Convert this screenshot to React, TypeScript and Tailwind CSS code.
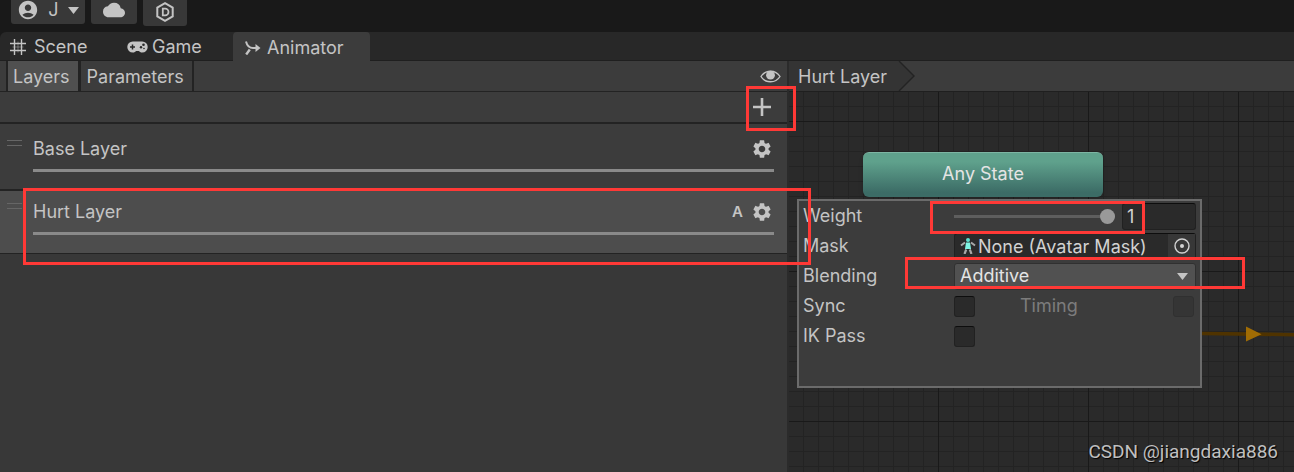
import { useState } from "react";
import { MdAccountCircle, MdCloud, MdSettings } from "react-icons/md";

const layers = [
  { id: 1, name: "Base Layer", additive: false },
  { id: 2, name: "Hurt Layer", additive: true },
];

function GridIcon() {
  return (
    <svg width="16" height="16" viewBox="0 0 16 16" stroke="currentColor" strokeWidth="1.4" fill="none">
      <path d="M4.5 0v16M11.5 0v16M0 4.5h16M0 11.5h16" />
      <path d="M8 2.5v11M2.5 8h11" strokeWidth="1" opacity="0.45" />
    </svg>
  );
}

function GameIcon() {
  return (
    <svg width="21" height="12" viewBox="0 0 21 12">
      <path
        fill="currentColor"
        d="M5.8 0.5h9.4a5.5 5.5 0 0 1 0 11c-1.6 0-2.6-.6-3.4-1.5H9.2c-.8.9-1.8 1.5-3.4 1.5a5.5 5.5 0 0 1 0-11z"
      />
      <path d="M5.5 3.5v5M3 6h5" stroke="#282828" strokeWidth="1.5" />
      <circle cx="16.5" cy="3.8" r="1.3" fill="#282828" />
      <circle cx="14" cy="6.3" r="1.2" fill="#282828" />
      <circle cx="17" cy="7.5" r="0.8" fill="#282828" />
    </svg>
  );
}

function AnimatorIcon() {
  return (
    <svg width="16" height="14" viewBox="0 0 16 14" fill="none" stroke="currentColor">
      <path d="M1 0.5C2 4.5 4.5 7 8 7h4" strokeWidth="2" />
      <path d="M1.2 13.5l3.6-5" strokeWidth="2.4" />
      <path d="M10.5 3L15.5 7l-5 4z" fill="currentColor" stroke="none" />
    </svg>
  );
}

function HexIcon() {
  return (
    <svg width="20" height="20" viewBox="0 0 20 20" fill="none" stroke="currentColor">
      <path d="M10 1.2l7.7 4.4v8.8L10 18.8l-7.7-4.4V5.6z" strokeWidth="2" />
      <path d="M7.8 6.6h2.3a3.4 3.4 0 0 1 0 6.8H7.8z" strokeWidth="1.8" />
    </svg>
  );
}

function EyeIcon() {
  return (
    <svg width="21" height="13" viewBox="0 0 21 13">
      <path
        d="M1 6.5C3.2 3 6.6 1.2 10.5 1.2S17.8 3 20 6.5c-2.2 3.5-5.6 5.3-9.5 5.3S3.2 10 1 6.5z"
        fill="none"
        stroke="currentColor"
        strokeWidth="1.4"
      />
      <circle cx="10.5" cy="5.2" r="4.4" fill="currentColor" />
    </svg>
  );
}

function AvatarIcon() {
  return (
    <svg width="16" height="16" viewBox="0 0 16 16">
      <circle cx="8" cy="2" r="2" fill="#5fe0cf" />
      <path d="M6 4.5h4l1 6.5H5z" fill="#7ff5e4" />
      <path d="M5 4.5L1 7.5M11 4.5l4 3" stroke="#a8a8a8" strokeWidth="2" />
      <path d="M6.2 11.5L4.5 16M9.8 11.5l1.7 4.5" stroke="#a8a8a8" strokeWidth="2.2" />
    </svg>
  );
}

function Arrow() {
  return (
    <svg width="11" height="7" viewBox="0 0 11 7" fill="currentColor">
      <path d="M0 0h11L5.5 7z" />
    </svg>
  );
}

const checkbox =
  "appearance-none size-[21px] rounded-[3px] border border-[#212121] border-t-[#0d0d0d] bg-[#2a2a2a] checked:bg-[#6b6b6b]";

export default function App() {
  const [tab, setTab] = useState("Layers");
  const [selected, setSelected] = useState(2);
  const [weight, setWeight] = useState(1);
  const [blending, setBlending] = useState("Additive");
  const [sync, setSync] = useState(false);
  const [ikPass, setIkPass] = useState(false);

  return (
    <div className="relative flex min-h-screen flex-col overflow-hidden bg-[#191919] font-['Inter','Liberation_Sans',sans-serif] text-lg leading-6 text-[#c4c4c4]">
      {/* top toolbar */}
      <header className="flex h-8 items-start gap-1.5 pl-[11px]">
        <button className="flex h-6 w-[74px] items-center justify-between rounded-b-[3px] bg-[#383838] px-1.5 pb-1">
          <MdAccountCircle size={22} />
          <span>J</span>
          <Arrow />
        </button>
        <button aria-label="Cloud" className="flex h-6 w-[46px] items-center justify-center rounded-b-[3px] bg-[#383838] pb-1">
          <MdCloud size={22} />
        </button>
        <button aria-label="Package" className="flex h-[26px] w-11 items-center justify-center rounded-b-[3px] bg-[#383838] pb-0.5">
          <HexIcon />
        </button>
      </header>

      {/* window tabs */}
      <nav className="flex h-[29px] rounded-tl-md border-b border-[#1f1f1f] bg-[#282828]">
        <button className="flex w-[117px] items-center gap-2 pt-0.5 pl-2.5">
          <GridIcon />
          Scene
        </button>
        <button className="flex w-[116px] items-center gap-1 pt-0.5 pl-2.5">
          <GameIcon />
          Game
        </button>
        <button className="-mb-px flex w-[137px] items-center gap-1.5 rounded-t-[4px] bg-[#3c3c3c] pt-0.5 pl-3">
          <AnimatorIcon />
          Animator
        </button>
      </nav>

      <main className="flex flex-1">
        {/* layer list */}
        <section className="flex flex-[787] flex-col border-r-2 border-[#2b2b2b] bg-[#383838]">
          <div className="flex h-[31px] items-stretch border-b border-[#232323] bg-[#3c3c3c]">
            <div className="ml-1.5 flex border-x-2 border-[#232323]">
              {["Layers", "Parameters"].map((item) => (
                <button
                  key={item}
                  onClick={() => setTab(item)}
                  className={`border-[#232323] pt-0.5 pr-2 pl-1.5 first:border-r-3 first:pl-[5px] ${
                    tab === item ? "bg-[#505050]" : "bg-[#3c3c3c]"
                  }`}
                >
                  {item}
                </button>
              ))}
            </div>
            <span className="flex flex-1 items-center justify-end pr-1.5">
              <EyeIcon />
            </span>
          </div>
          <div className="flex h-8 items-center justify-end border-b-2 border-[#232323] bg-[#3c3c3c] pr-4">
            <button aria-label="Add layer">
              <svg width="18" height="18" viewBox="0 0 18 18" stroke="currentColor" strokeWidth="2.6">
                <path d="M9 0v18M0 9h18" />
              </svg>
            </button>
          </div>
          <ul>
            {layers.map((layer) => (
              <li
                key={layer.id}
                onClick={() => setSelected(layer.id)}
                className={`flex border-[#232323] ${
                  selected === layer.id ? "h-[63px] border-b bg-[#4d4d4d]" : "h-[67px] border-b-2 bg-[#3c3c3c] pt-1"
                }`}
              >
                <span className="ml-[7px] mt-3 h-1.5 w-[15px] border-y border-[#666666]"></span>
                <div className="mr-[13px] ml-[11px] flex-1 pt-2">
                  <div className="flex items-center justify-between pr-px">
                    <span className="pt-px">{layer.name}</span>
                    <span className="flex items-center gap-2">
                      {layer.additive && <b className="text-[15px] font-semibold">A</b>}
                      <button aria-label={layer.name + " settings"}>
                        <MdSettings size={22} />
                      </button>
                    </span>
                  </div>
                  <div className="mt-2 h-[3px] bg-[#8a8a8a]"></div>
                </div>
              </li>
            ))}
          </ul>
        </section>

        {/* state machine graph */}
        <section className="flex flex-[505] flex-col">
          <div className="flex h-[31px] border-b border-[#1f1f1f] bg-[#3c3c3c]">
            <a href="#hurt-layer" className="flex items-center bg-[#343434] pt-0.5 pr-0.5 pl-[9px]">
              Hurt Layer
            </a>
            <svg width="26" height="30" viewBox="0 0 26 30">
              <path d="M0 0h10l15 15-15 15H0z" fill="#343434" />
              <path d="M10 0l15 15-15 15" fill="none" stroke="#232323" strokeWidth="1.4" />
            </svg>
          </div>
          <div className="relative flex-1 bg-[#2a2a2a] bg-[linear-gradient(to_right,#191919_1px,transparent_1px),linear-gradient(to_bottom,#191919_1px,transparent_1px),linear-gradient(to_right,#232323_1px,transparent_1px),linear-gradient(to_bottom,#232323_1px,transparent_1px)] bg-size-[150px_150px,150px_150px,15px_15px,15px_15px] bg-position-[-1px_29px,-1px_29px,-1px_14px,-1px_14px]">
            <svg className="absolute top-[234px] left-[413px]" width="120" height="16" viewBox="0 0 120 16">
              <path d="M0 7.5L120 9" stroke="#4f3300" strokeWidth="3.5" />
              <path d="M44 0.5l15.5 7.8L44 15.6z" fill="#a06c04" />
            </svg>

            <div className="absolute top-[60px] left-[74px] flex h-[45px] w-60 items-center justify-center rounded-md border-t border-[#7db5a3] bg-linear-to-b from-[#5fa18c] from-20% to-[#3c6c66] to-90% pb-0.5 text-[#e4e4e4] shadow-md">
              Any State
            </div>

            <form className="absolute top-[107px] left-2 h-[189px] w-[405px] border-2 border-[#6b6b6b] bg-[#3c3c3c]">
              <div className="flex h-[30px] items-center px-1">
                <label htmlFor="weight" className="w-[151px]">Weight</label>
                <input
                  id="weight"
                  type="range"
                  min={0}
                  max={1}
                  step={0.01}
                  value={weight}
                  onChange={(e) => setWeight(parseFloat(e.target.value))}
                  className="h-4 w-[161px] appearance-none bg-transparent [&::-webkit-slider-runnable-track]:h-[3px] [&::-webkit-slider-runnable-track]:bg-[#5e5e5e] [&::-webkit-slider-thumb]:-mt-1.5 [&::-webkit-slider-thumb]:size-[15px] [&::-webkit-slider-thumb]:appearance-none [&::-webkit-slider-thumb]:rounded-full [&::-webkit-slider-thumb]:bg-[#999999]"
                />
                <input
                  aria-label="Weight value"
                  value={weight}
                  onChange={(e) => setWeight(Number(e.target.value) || 0)}
                  className="ml-[7px] h-[27px] min-w-0 flex-1 rounded-[3px] border border-[#212121] border-t-[#0d0d0d] bg-[#2a2a2a] pl-1 text-[#d2d2d2]"
                />
              </div>
              <div className="flex h-[30px] items-center px-1">
                <label htmlFor="mask" className="w-[151px]">Mask</label>
                <button
                  id="mask"
                  type="button"
                  className="flex h-[27px] flex-1 items-center rounded-[3px] border border-[#212121] border-t-[#0d0d0d] bg-[#2a2a2a] pl-[5px] text-[#d2d2d2]"
                >
                  <AvatarIcon />
                  <span className="ml-0.5 flex-1 pt-0.5 text-left whitespace-nowrap">None (Avatar Mask)</span>
                  <span className="flex h-full w-[27px] items-center justify-center bg-[#373737]">
                    <svg width="16" height="16" viewBox="0 0 16 16">
                      <circle cx="8" cy="8" r="7" fill="none" stroke="currentColor" strokeWidth="1.4" />
                      <circle cx="8" cy="8" r="2" fill="currentColor" />
                    </svg>
                  </span>
                </button>
              </div>
              <div className="flex h-[30px] items-center px-1">
                <label htmlFor="blending" className="w-[151px]">Blending</label>
                <div className="relative flex-1">
                  <select
                    id="blending"
                    value={blending}
                    onChange={(e) => setBlending(e.target.value)}
                    className="block h-[27px] w-full appearance-none rounded-[3px] border border-[#303030] bg-[#515151] pl-[5px] text-[#e4e4e4]"
                  >
                    <option>Override</option>
                    <option>Additive</option>
                  </select>
                  <span className="pointer-events-none absolute top-2.5 right-2">
                    <Arrow />
                  </span>
                </div>
              </div>
              <div className="flex h-[30px] items-center pr-1.5 pl-1">
                <label htmlFor="sync" className="w-[151px]">Sync</label>
                <input id="sync" type="checkbox" className={checkbox} checked={sync} onChange={(e) => setSync(e.target.checked)} />
                <label htmlFor="timing" className="ml-[45px] flex-1 text-[#7c7c7c]">Timing</label>
                <input id="timing" type="checkbox" disabled className="size-[21px] appearance-none rounded-[3px] border border-[#303030] bg-[#353535]" />
              </div>
              <div className="flex h-[30px] items-center px-1">
                <label htmlFor="ikPass" className="w-[151px]">IK Pass</label>
                <input id="ikPass" type="checkbox" className={checkbox} checked={ikPass} onChange={(e) => setIkPass(e.target.checked)} />
              </div>
            </form>

            <div className="absolute right-4 bottom-2 font-['Roboto','Liberation_Sans',sans-serif] text-[19px] text-[#c0c0c0] [text-shadow:1px_1px_1px_#000]">
              CSDN @jiangdaxia886
            </div>
          </div>
        </section>
      </main>

      {/* highlight marks */}
      <div className="pointer-events-none absolute top-[86px] left-[746px] h-[45px] w-[50px] border-3 border-[#ff3936]"></div>
      <div className="pointer-events-none absolute top-[188px] left-[23px] h-[77px] w-[788px] border-3 border-[#ff3936]"></div>
      <div className="pointer-events-none absolute top-[201px] left-[930px] h-[33px] w-[215px] border-3 border-[#ff3936]"></div>
      <div className="pointer-events-none absolute top-[257px] left-[905px] h-8 w-[340px] border-3 border-[#ff3936]"></div>
    </div>
  );
}
